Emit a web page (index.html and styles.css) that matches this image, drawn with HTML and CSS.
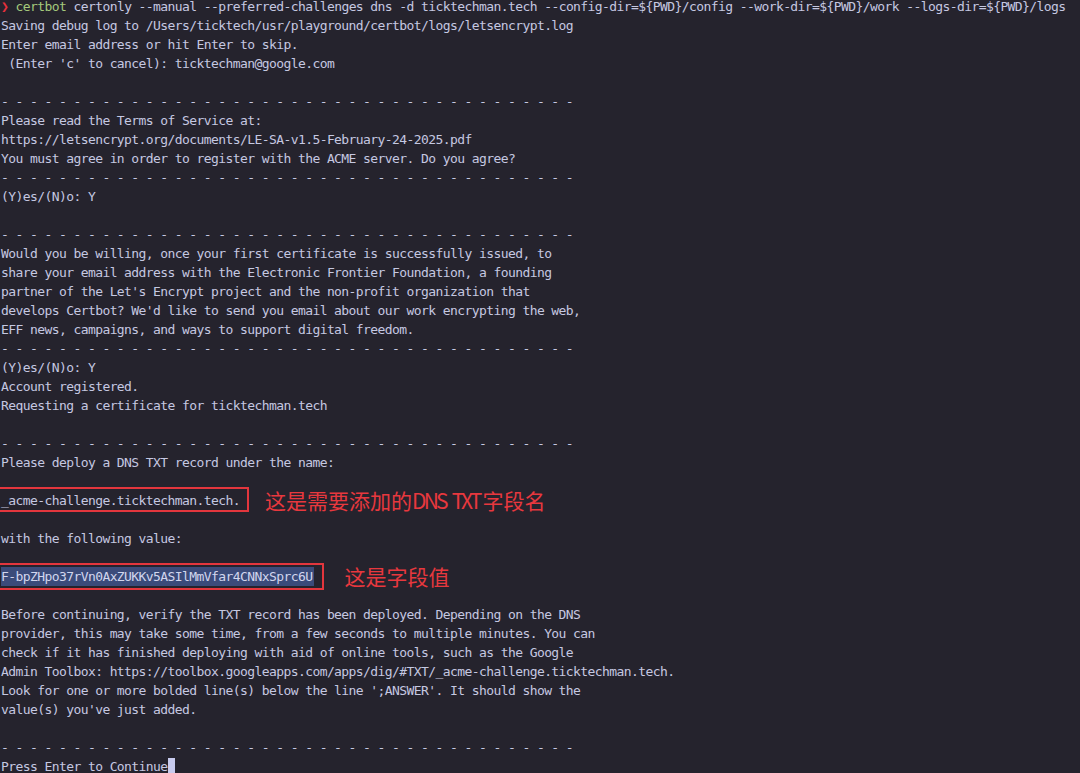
FILE: index.html
```html
<!DOCTYPE html>
<html lang="en">
<head>
  <meta charset="UTF-8">
  <title>certbot</title>
  <link rel="stylesheet" href="styles.css">
</head>
<body>
  <div class="term">
    <div class="ln"><span class="prompt">❯</span> <span class="cmd">certbot</span> certonly --manual --preferred-challenges dns -d ticktechman.tech --config-dir=${PWD}/config --work-dir=${PWD}/work --logs-dir=${PWD}/logs</div>
    <div class="ln">Saving debug log to /Users/ticktech/usr/playground/certbot/logs/letsencrypt.log</div>
    <div class="ln">Enter email address or hit Enter to skip.</div>
    <div class="ln"> (Enter 'c' to cancel): ticktechman@google.com</div>
    <div class="ln"></div>
    <div class="ln">- - - - - - - - - - - - - - - - - - - - - - - - - - - - - - - - - - - - - - - -</div>
    <div class="ln">Please read the Terms of Service at:</div>
    <div class="ln">https://letsencrypt.org/documents/LE-SA-v1.5-February-24-2025.pdf</div>
    <div class="ln">You must agree in order to register with the ACME server. Do you agree?</div>
    <div class="ln">- - - - - - - - - - - - - - - - - - - - - - - - - - - - - - - - - - - - - - - -</div>
    <div class="ln">(Y)es/(N)o: Y</div>
    <div class="ln"></div>
    <div class="ln">- - - - - - - - - - - - - - - - - - - - - - - - - - - - - - - - - - - - - - - -</div>
    <div class="ln">Would you be willing, once your first certificate is successfully issued, to</div>
    <div class="ln">share your email address with the Electronic Frontier Foundation, a founding</div>
    <div class="ln">partner of the Let's Encrypt project and the non-profit organization that</div>
    <div class="ln">develops Certbot? We'd like to send you email about our work encrypting the web,</div>
    <div class="ln">EFF news, campaigns, and ways to support digital freedom.</div>
    <div class="ln">- - - - - - - - - - - - - - - - - - - - - - - - - - - - - - - - - - - - - - - -</div>
    <div class="ln">(Y)es/(N)o: Y</div>
    <div class="ln">Account registered.</div>
    <div class="ln">Requesting a certificate for ticktechman.tech</div>
    <div class="ln"></div>
    <div class="ln">- - - - - - - - - - - - - - - - - - - - - - - - - - - - - - - - - - - - - - - -</div>
    <div class="ln">Please deploy a DNS TXT record under the name:</div>
    <div class="ln"></div>
    <div class="ln row">
      <span class="box box-name">_acme-challenge.ticktechman.tech.</span>
      <span class="note note-name">这是需要添加的<span class="latin">DNS TXT</span>字段名</span>
    </div>
    <div class="ln"></div>
    <div class="ln">with the following value:</div>
    <div class="ln"></div>
    <div class="ln row">
      <span class="box box-value"><span class="sel">F-bpZHpo37rVn0AxZUKKv5ASIlMmVfar4CNNxSprc6U</span></span>
      <span class="note note-value">这是字段值</span>
    </div>
    <div class="ln"></div>
    <div class="ln">Before continuing, verify the TXT record has been deployed. Depending on the DNS</div>
    <div class="ln">provider, this may take some time, from a few seconds to multiple minutes. You can</div>
    <div class="ln">check if it has finished deploying with aid of online tools, such as the Google</div>
    <div class="ln">Admin Toolbox: https://toolbox.googleapps.com/apps/dig/#TXT/_acme-challenge.ticktechman.tech.</div>
    <div class="ln">Look for one or more bolded line(s) below the line ';ANSWER'. It should show the</div>
    <div class="ln">value(s) you've just added.</div>
    <div class="ln"></div>
    <div class="ln">- - - - - - - - - - - - - - - - - - - - - - - - - - - - - - - - - - - - - - - -</div>
    <div class="ln">Press Enter to Continue<span class="cursor"></span></div>
  </div>
</body>
</html>
```

FILE: styles.css
```css
html, body {
  margin: 0;
  height: 100%;
  background-color: #25232d;
  overflow: hidden;
}
.term {
  margin-top: -3px;
  padding-left: 1px;
  font-family: "DejaVu Sans Mono", monospace;
  font-size: 13px;
  letter-spacing: -0.585px;
  color: #c5c8e1;
}
.ln {
  height: 19px;
  line-height: 19px;
  white-space: pre;
}
.prompt {
  color: #e8303c;
  font-weight: bold;
}
.cmd {
  color: #a4c97c;
}
.row {
  display: flex;
  align-items: flex-start;
}
.box {
  box-sizing: border-box;
  border: 2px solid #e3363d;
  margin-left: -3px;
  padding-left: 1px;
  line-height: 19px;
}
.box-name {
  height: 25px;
  margin-top: -4px;
  padding-top: 2px;
  padding-right: 7px;
}
.box-value {
  height: 27px;
  margin-top: -4px;
  padding-top: 2px;
  padding-right: 8px;
}
.sel {
  display: inline-block;
  height: 19px;
  padding-right: 2px;
  background-color: #3b4b7a;
  color: #d2d6ee;
}
.note {
  font-family: "Noto Sans CJK SC", sans-serif;
  font-size: 21px;
  line-height: 19px;
  color: #e8383e;
  letter-spacing: 0;
}
.note-name {
  margin-left: 16px;
}
.note-value {
  margin-left: 20px;
}
.latin {
  letter-spacing: -2.8px;
  word-spacing: 4px;
  margin-right: 3px;
}
.cursor {
  display: inline-block;
  width: 7px;
  height: 17px;
  vertical-align: -4px;
  background-color: #c8cbee;
}
```
